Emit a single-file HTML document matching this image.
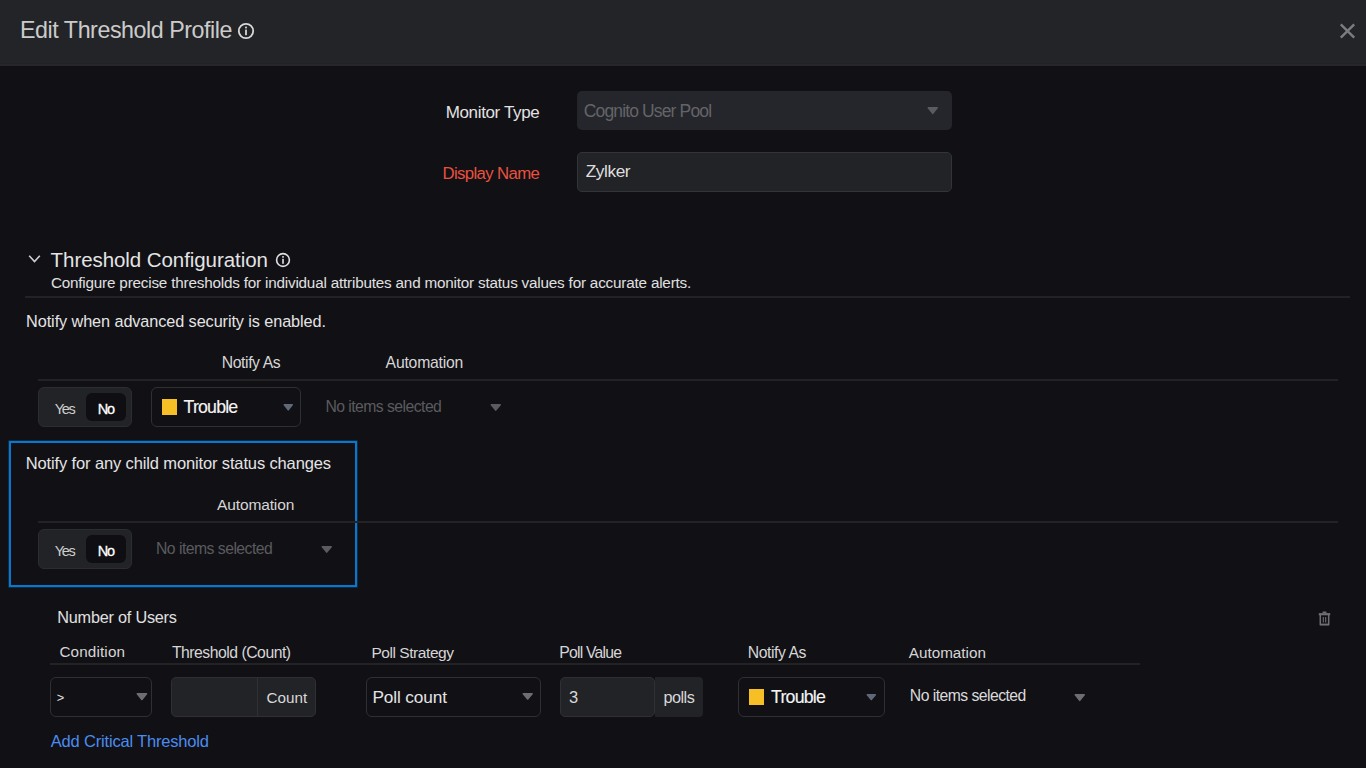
<!DOCTYPE html>
<html><head><meta charset="utf-8"><title>Edit Threshold Profile</title>
<style>
html,body{margin:0;padding:0;}
body{width:1366px;height:768px;overflow:hidden;background:#111015;position:relative;font-family:"Liberation Sans",sans-serif;}
.t{position:absolute;white-space:nowrap;line-height:normal;}
.b{position:absolute;display:block;}
</style></head><body>
<div class="b" style="left:0px;top:0px;width:1366px;height:64px;background:#232428"></div>
<div class="b" style="left:0px;top:63px;width:1366px;height:1px;background:#202226"></div>
<div class="b" style="left:0px;top:64px;width:1366px;height:2px;background:#27272a"></div>
<div class="t" style="left:20.00px;top:16.70px;font-size:23.25px;letter-spacing:-0.446px;color:#cbcbcb;">Edit Threshold Profile</div>
<svg class="b" style="left:237px;top:22px" width="18" height="18" viewBox="0 0 18 18"><circle cx="9" cy="9" r="7.2" fill="none" stroke="#d8d8d8" stroke-width="1.8"/><rect x="8.1" y="7.6" width="1.8" height="5.6" fill="#d8d8d8"/><rect x="8.1" y="4.6" width="1.8" height="1.8" fill="#d8d8d8"/></svg>
<svg class="b" style="left:1339px;top:22px" width="17" height="18" viewBox="0 0 17 18"><path d="M1.8 2.3 L15.2 15.7 M15.2 2.3 L1.8 15.7" stroke="#7c7c80" stroke-width="2.4" stroke-linecap="butt"/></svg>
<div class="t" style="left:445.70px;top:102.60px;font-size:17.0px;letter-spacing:-0.349px;color:#e2e2e2;">Monitor Type</div>
<div class="b" style="left:577px;top:91px;width:375px;height:39px;background:#25262b;border-radius:5px"></div>
<div class="t" style="left:583.80px;top:100.90px;font-size:17.5px;letter-spacing:-0.862px;color:#636468;">Cognito User Pool</div>
<svg class="b" style="left:926.5px;top:107px;overflow:visible" width="11.50" height="8.10" viewBox="-0.5 0 11.50 8.10"><path d="M0.8 0.8 L9.70 0.8 L5.25 6.30 Z" fill="#5b5c61" stroke="#5b5c61" stroke-width="1.6" stroke-linejoin="round"/></svg>
<div class="t" style="left:442.50px;top:163.60px;font-size:16.75px;letter-spacing:-0.632px;color:#e8523f;">Display Name</div>
<div class="b" style="left:577px;top:152px;width:375px;height:40px;background:#222327;border:1px solid #333439;border-radius:5px;box-sizing:border-box"></div>
<div class="t" style="left:585.70px;top:160.60px;font-size:17.25px;letter-spacing:-0.408px;color:#dedede;">Zylker</div>
<svg class="b" style="left:28px;top:254px" width="13" height="10" viewBox="0 0 13 10"><path d="M1.2 1.8 L6.5 7.6 L11.8 1.8" fill="none" stroke="#d0d0d0" stroke-width="1.6"/></svg>
<div class="t" style="left:50.60px;top:248.20px;font-size:20.5px;letter-spacing:-0.069px;color:#e4e4e4;">Threshold Configuration</div>
<svg class="b" style="left:275px;top:252px" width="16" height="16" viewBox="0 0 16 16"><circle cx="8" cy="8" r="6.4" fill="none" stroke="#e0e0e0" stroke-width="1.6"/><rect x="7.2" y="6.8" width="1.6" height="5" fill="#e0e0e0"/><rect x="7.2" y="4.1" width="1.6" height="1.6" fill="#e0e0e0"/></svg>
<div class="t" style="left:50.90px;top:274.30px;font-size:15.25px;letter-spacing:-0.191px;color:#e0e0e0;">Configure precise thresholds for individual attributes and monitor status values for accurate alerts.</div>
<div class="b" style="left:25px;top:296px;width:1325px;height:2px;background:#232326"></div>
<div class="t" style="left:26.10px;top:312.30px;font-size:16.25px;letter-spacing:-0.090px;color:#e4e4e4;">Notify when advanced security is enabled.</div>
<div class="t" style="left:221.70px;top:354.00px;font-size:15.75px;letter-spacing:-0.391px;color:#d6d6d6;">Notify As</div>
<div class="t" style="left:385.60px;top:354.00px;font-size:15.75px;letter-spacing:-0.210px;color:#d6d6d6;">Automation</div>
<div class="b" style="left:38px;top:379px;width:1300px;height:2px;background:#232326"></div>
<div class="b" style="left:38px;top:386.5px;width:94px;height:40.0px;background:#222327;border:1px solid #2c2d31;border-radius:6px;box-sizing:border-box"></div>
<div class="b" style="left:86px;top:392.5px;width:40px;height:28.5px;background:#0f0e12;border-radius:6px"></div>
<div class="t" style="left:54.70px;top:400.50px;font-size:14.5px;letter-spacing:-1.312px;color:#cfcfcf;">Yes</div>
<div class="t" style="left:97.70px;top:400.50px;font-size:14.5px;letter-spacing:-1.263px;color:#ffffff;-webkit-text-stroke:0.3px #ffffff;">No</div>
<div class="b" style="left:151px;top:387px;width:150px;height:39.5px;border:1px solid #2f3034;border-radius:6px;box-sizing:border-box"></div>
<div class="b" style="left:161.7px;top:399px;width:15.5px;height:15.600000000000023px;background:#f6bf26"></div>
<div class="t" style="left:183.50px;top:396.90px;font-size:17.75px;letter-spacing:-0.800px;color:#f4f4f4;-webkit-text-stroke:0.15px #f4f4f4;">Trouble</div>
<svg class="b" style="left:282.5px;top:404px;overflow:visible" width="10.50" height="7.60" viewBox="-0.5 0 10.50 7.60"><path d="M0.8 0.8 L8.70 0.8 L4.75 5.80 Z" fill="#5f6979" stroke="#5f6979" stroke-width="1.6" stroke-linejoin="round"/></svg>
<div class="t" style="left:325.40px;top:397.90px;font-size:15.75px;letter-spacing:-0.543px;color:#5a5b5f;">No items selected</div>
<svg class="b" style="left:489.5px;top:403.5px;overflow:visible" width="11.50" height="7.90" viewBox="-0.5 0 11.50 7.90"><path d="M0.8 0.8 L9.70 0.8 L5.25 6.10 Z" fill="#5b5c61" stroke="#5b5c61" stroke-width="1.6" stroke-linejoin="round"/></svg>
<div class="b" style="left:9px;top:441px;width:348px;height:146px;border:2px solid #0a76cc;box-shadow:0 0 0 0.5px rgba(10,118,204,0.55);box-sizing:border-box"></div>
<div class="t" style="left:25.80px;top:453.70px;font-size:16.5px;letter-spacing:-0.135px;color:#e4e4e4;">Notify for any child monitor status changes</div>
<div class="t" style="left:217.00px;top:495.50px;font-size:15.5px;letter-spacing:-0.126px;color:#d6d6d6;">Automation</div>
<div class="b" style="left:38px;top:521px;width:1300px;height:2px;background:#232326"></div>
<div class="b" style="left:38px;top:528.5px;width:94px;height:40.0px;background:#222327;border:1px solid #2c2d31;border-radius:6px;box-sizing:border-box"></div>
<div class="b" style="left:86px;top:534.5px;width:40px;height:28.5px;background:#0f0e12;border-radius:6px"></div>
<div class="t" style="left:54.70px;top:542.50px;font-size:14.5px;letter-spacing:-1.312px;color:#cfcfcf;">Yes</div>
<div class="t" style="left:97.70px;top:542.50px;font-size:14.5px;letter-spacing:-1.263px;color:#ffffff;-webkit-text-stroke:0.3px #ffffff;">No</div>
<div class="t" style="left:156.00px;top:539.80px;font-size:15.75px;letter-spacing:-0.524px;color:#5a5b5f;">No items selected</div>
<svg class="b" style="left:320.5px;top:546px;overflow:visible" width="11.50" height="7.90" viewBox="-0.5 0 11.50 7.90"><path d="M0.8 0.8 L9.70 0.8 L5.25 6.10 Z" fill="#5b5c61" stroke="#5b5c61" stroke-width="1.6" stroke-linejoin="round"/></svg>
<div class="t" style="left:57.30px;top:608.30px;font-size:16.25px;letter-spacing:-0.229px;color:#e0e0e0;">Number of Users</div>
<svg class="b" style="left:1318px;top:611px" width="13" height="15" viewBox="0 0 13 15"><path d="M4.6 1.3 H8.4" stroke="#6f6f73" stroke-width="1.6"/><path d="M0.8 3.2 H12.2" stroke="#6f6f73" stroke-width="2.2"/><path d="M2.3 4 V13.4 H10.7 V4" fill="none" stroke="#6f6f73" stroke-width="1.5"/><path d="M2 13.6 H11" stroke="#6f6f73" stroke-width="1.6"/><path d="M5.3 6 V11.4 M7.7 6 V11.4" stroke="#6f6f73" stroke-width="1.1"/></svg>
<div class="t" style="left:59.40px;top:643.30px;font-size:15.25px;letter-spacing:0.145px;color:#d6d6d6;">Condition</div>
<div class="t" style="left:171.90px;top:643.70px;font-size:15.75px;letter-spacing:-0.484px;color:#d6d6d6;">Threshold (Count)</div>
<div class="t" style="left:371.40px;top:643.50px;font-size:15.5px;letter-spacing:-0.440px;color:#d6d6d6;">Poll Strategy</div>
<div class="t" style="left:559.20px;top:643.70px;font-size:15.75px;letter-spacing:-0.761px;color:#d6d6d6;">Poll Value</div>
<div class="t" style="left:747.70px;top:643.70px;font-size:15.75px;letter-spacing:-0.428px;color:#d6d6d6;">Notify As</div>
<div class="t" style="left:908.70px;top:643.60px;font-size:15.25px;letter-spacing:0.019px;color:#d6d6d6;">Automation</div>
<div class="b" style="left:50px;top:663px;width:1090px;height:2px;background:#232326"></div>
<div class="b" style="left:50px;top:677px;width:102px;height:39.5px;border:1px solid #2f3034;border-radius:6px;box-sizing:border-box"></div>
<div class="t" style="left:56.70px;top:690.00px;font-size:12.75px;letter-spacing:0.000px;color:#e0e0e0;">></div>
<svg class="b" style="left:136.0px;top:693px;overflow:visible" width="11.80" height="8.20" viewBox="-0.5 0 11.80 8.20"><path d="M0.8 0.8 L10.00 0.8 L5.40 6.40 Z" fill="#6e6e72" stroke="#6e6e72" stroke-width="1.6" stroke-linejoin="round"/></svg>
<div class="b" style="left:171px;top:676.5px;width:145px;height:40.0px;background:#222327;border:1px solid #2f3034;border-radius:5px;box-sizing:border-box"></div>
<div class="b" style="left:257px;top:677px;width:1px;height:39px;background:#2f3034"></div>
<div class="t" style="left:266.50px;top:688.50px;font-size:15.25px;letter-spacing:0.028px;color:#d8d8d8;">Count</div>
<div class="b" style="left:366px;top:676.5px;width:175px;height:40.0px;border:1px solid #2f3034;border-radius:6px;box-sizing:border-box"></div>
<div class="t" style="left:372.40px;top:686.60px;font-size:17.25px;letter-spacing:-0.117px;color:#e4e4e4;">Poll count</div>
<svg class="b" style="left:522.1px;top:693.3px;overflow:visible" width="11.40" height="7.80" viewBox="-0.5 0 11.40 7.80"><path d="M0.8 0.8 L9.60 0.8 L5.20 6.00 Z" fill="#6e6e72" stroke="#6e6e72" stroke-width="1.6" stroke-linejoin="round"/></svg>
<div class="b" style="left:560px;top:676.5px;width:95px;height:40.0px;background:#222327;border:1px solid #2f3034;border-radius:5px;box-sizing:border-box"></div>
<div class="b" style="left:655px;top:676.5px;width:48px;height:40.0px;background:#222327;border-radius:0 4px 4px 0"></div>
<div class="t" style="left:569.00px;top:687.50px;font-size:16.5px;letter-spacing:0.000px;color:#d8d8d8;">3</div>
<div class="t" style="left:663.60px;top:687.50px;font-size:16.25px;letter-spacing:-0.559px;color:#d8d8d8;">polls</div>
<div class="b" style="left:738px;top:676.5px;width:147px;height:40.0px;border:1px solid #2f3034;border-radius:6px;box-sizing:border-box"></div>
<div class="b" style="left:749px;top:689.3px;width:15.299999999999955px;height:15.400000000000091px;background:#f6bf26"></div>
<div class="t" style="left:771.10px;top:686.50px;font-size:17.75px;letter-spacing:-0.800px;color:#f4f4f4;-webkit-text-stroke:0.15px #f4f4f4;">Trouble</div>
<svg class="b" style="left:866.2px;top:694.2px;overflow:visible" width="10.60" height="7.20" viewBox="-0.5 0 10.60 7.20"><path d="M0.8 0.8 L8.80 0.8 L4.80 5.40 Z" fill="#5f6979" stroke="#5f6979" stroke-width="1.6" stroke-linejoin="round"/></svg>
<div class="t" style="left:909.80px;top:687.40px;font-size:15.75px;letter-spacing:-0.543px;color:#dadada;">No items selected</div>
<svg class="b" style="left:1073.5px;top:693.5px;overflow:visible" width="11.50" height="8.10" viewBox="-0.5 0 11.50 8.10"><path d="M0.8 0.8 L9.70 0.8 L5.25 6.30 Z" fill="#6e6e72" stroke="#6e6e72" stroke-width="1.6" stroke-linejoin="round"/></svg>
<div class="t" style="left:50.80px;top:731.50px;font-size:16.5px;letter-spacing:-0.186px;color:#4b8cf0;">Add Critical Threshold</div>
</body></html>
